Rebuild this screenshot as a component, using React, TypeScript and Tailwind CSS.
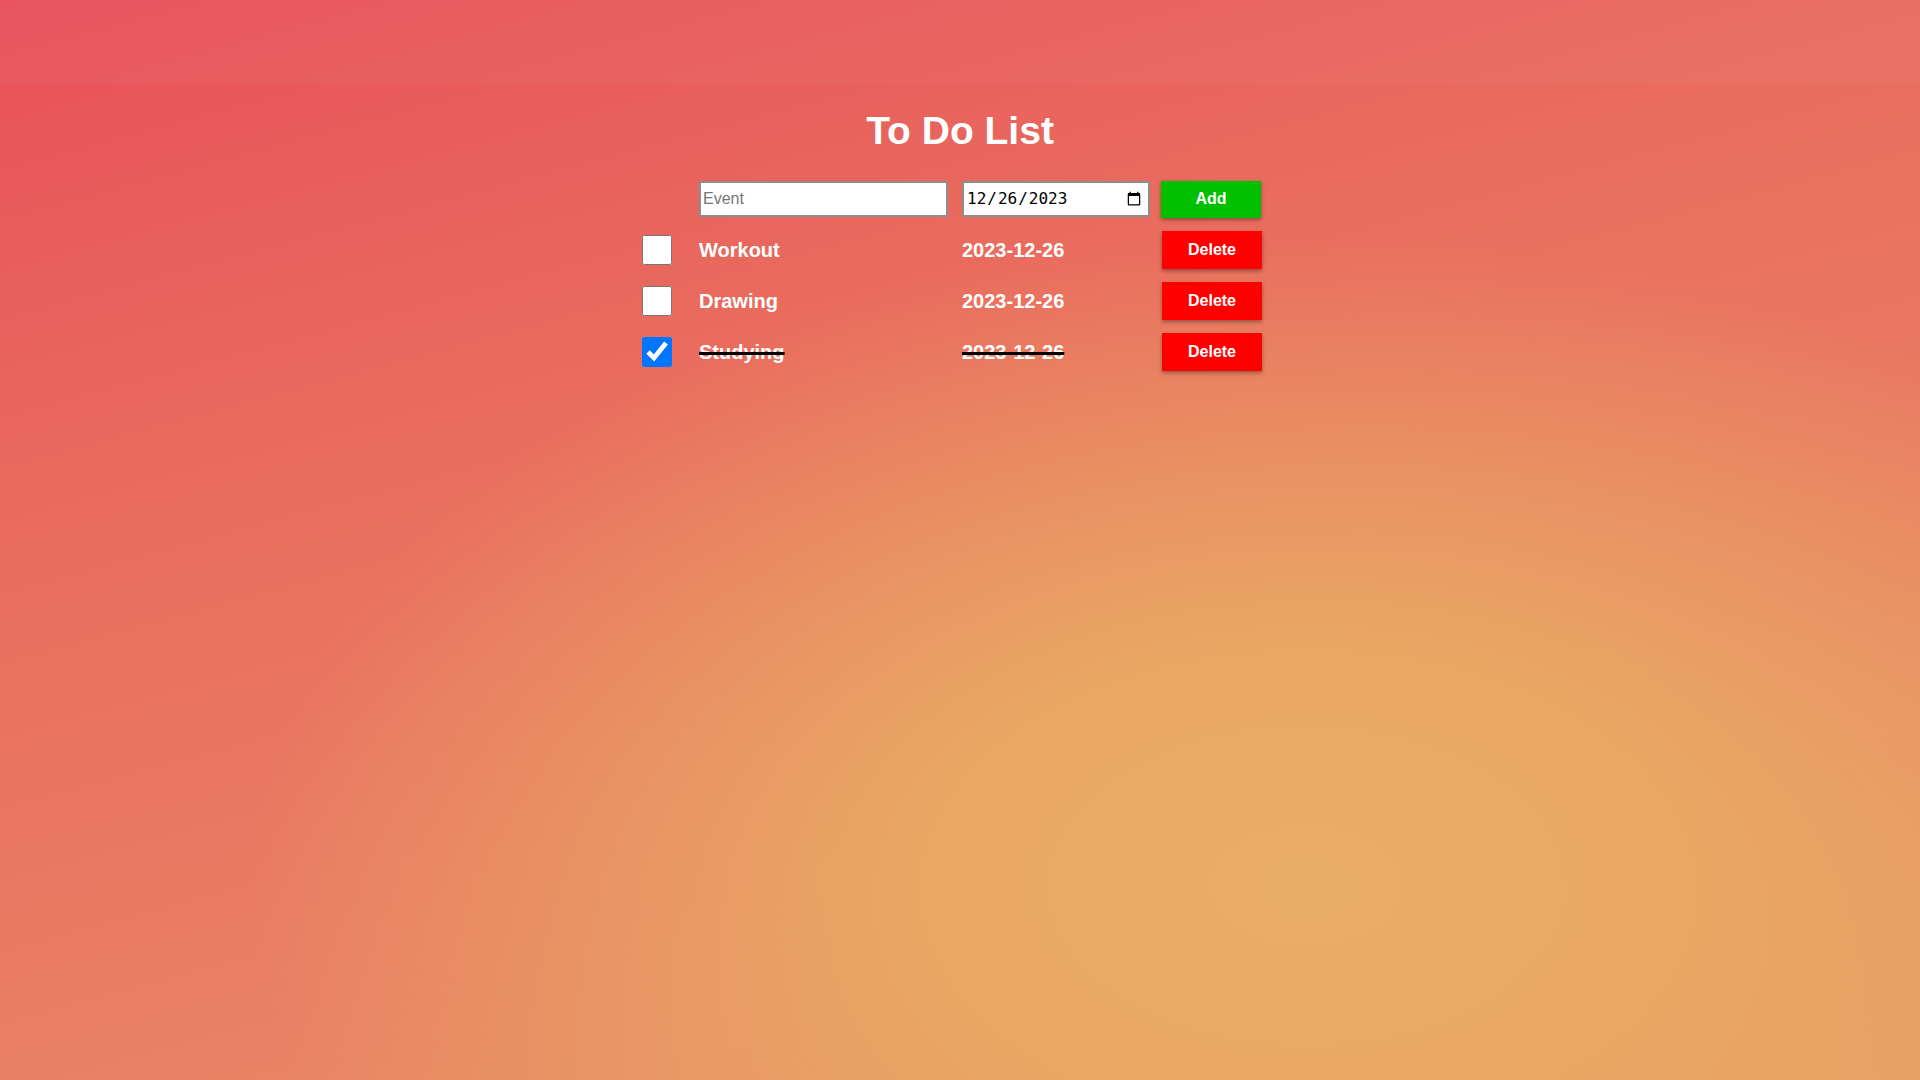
import React, { useState } from 'react';

type Todo = { id: number; name: string; date: string; done: boolean };

const initialTodos: Todo[] = [
  { id: 1, name: 'Workout', date: '2023-12-26', done: false },
  { id: 2, name: 'Drawing', date: '2023-12-26', done: false },
  { id: 3, name: 'Studying', date: '2023-12-26', done: true },
];

export default function App() {
  const [todos, setTodos] = useState<Todo[]>(initialTodos);
  const [name, setName] = useState('');
  const [date, setDate] = useState('2023-12-26');

  const addTodo = () => {
    if (!name.trim()) return;
    setTodos([...todos, { id: Date.now(), name, date, done: false }]);
    setName('');
  };

  const toggle = (id: number) =>
    setTodos(todos.map((t) => (t.id === id ? { ...t, done: !t.done } : t)));

  const remove = (id: number) => setTodos(todos.filter((t) => t.id !== id));

  return (
    <div className="min-h-screen w-full bg-[image:radial-gradient(ellipse_55%_60%_at_68%_82%,#e9ae65_0%,#e9a864_35%,rgba(233,160,100,0)_100%),linear-gradient(165deg,#e8505a_0%,#e96b5e_32%,#e98064_68%,#e89a66_100%)] font-['Liberation_Sans',Arial,sans-serif]">
      <div className="h-[84px] bg-white/[0.03]" />
      <h1 className="mt-[24px] text-center text-[39px] leading-[45px] font-bold text-white">
        To Do List
      </h1>

      <div className="mx-auto mt-[21px] w-[636px] pr-[17px]">
        <div className="grid h-[50px] grid-cols-[57px_263px_199px_100px] items-center">
          <div />
          <input
            type="text"
            placeholder="Event"
            value={name}
            onChange={(e) => setName(e.target.value)}
            className="h-[36px] w-[249px] border-2 border-[#8d8d8d] bg-white px-[2px] text-[16px] text-black placeholder:text-[#757575] outline-none"
          />
          <input
            type="date"
            value={date}
            onChange={(e) => setDate(e.target.value)}
            className="h-[36px] w-[188px] border-2 border-[#8d8d8d] bg-white pl-[2px] pr-[4px] font-['DejaVu_Sans_Mono',monospace] text-[16px] text-black outline-none"
          />
          <button
            onClick={addTodo}
            className="h-[37px] w-[100px] bg-[#00c000] text-[16px] font-bold text-white shadow-[0_2px_4px_rgba(0,0,0,0.35)]"
          >
            Add
          </button>
        </div>

        {todos.map((todo) => (
          <div
            key={todo.id}
            className="grid h-[51px] grid-cols-[57px_263px_199px_100px] items-center"
          >
            <input
              type="checkbox"
              checked={todo.done}
              onChange={() => toggle(todo.id)}
              className="m-0 h-[30px] w-[30px]"
            />
            <span
              className={
                todo.done
                  ? 'text-[20px] font-bold text-white line-through decoration-black decoration-[3px]'
                  : 'text-[20px] font-bold text-white'
              }
            >
              {todo.name}
            </span>
            <span
              className={
                todo.done
                  ? 'text-[20px] font-bold text-white line-through decoration-black decoration-[3px]'
                  : 'text-[20px] font-bold text-white'
              }
            >
              {todo.date}
            </span>
            <button
              onClick={() => remove(todo.id)}
              className="ml-px h-[38px] w-[100px] bg-[#ff0000] text-[16px] font-bold text-white shadow-[0_2px_4px_rgba(0,0,0,0.35)]"
            >
              Delete
            </button>
          </div>
        ))}
      </div>
    </div>
  );
}
